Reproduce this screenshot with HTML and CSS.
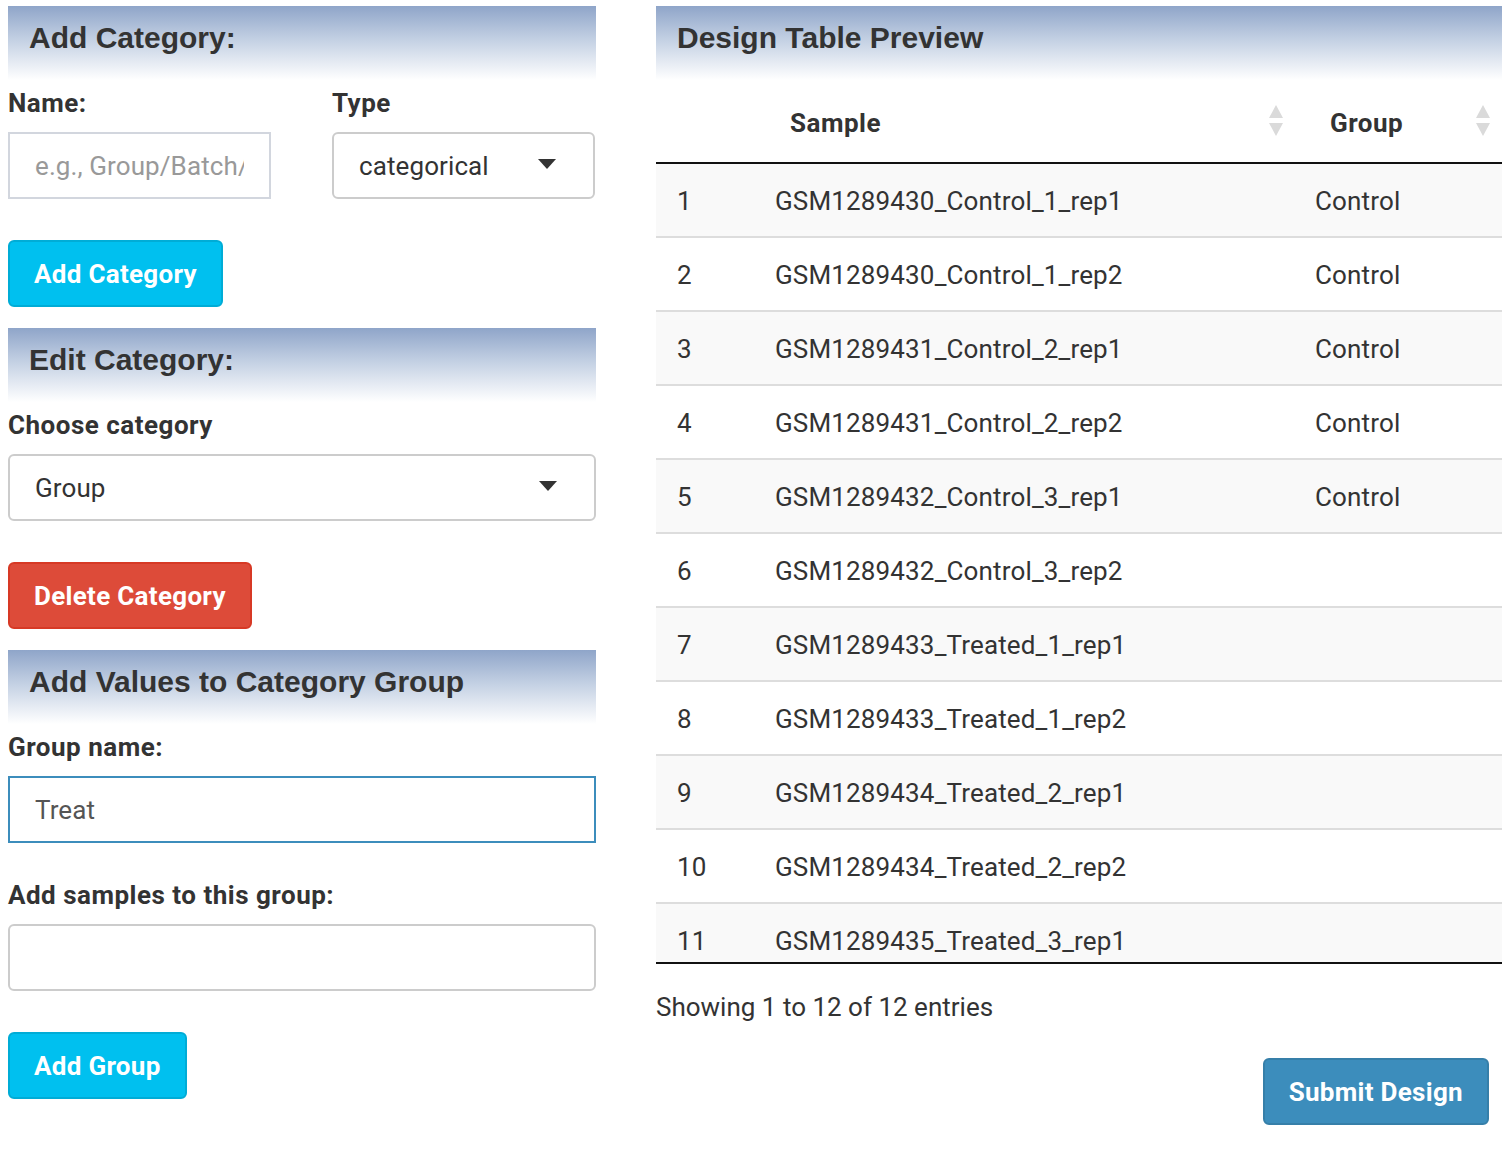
FILE: index.html
```html
<!DOCTYPE html>
<html lang="en">
<head>
<meta charset="utf-8">
<title>Design Table</title>
<link rel="stylesheet" href="styles.css">
</head>
<body>
<div class="page">
  <div class="left">
    <h3 class="box-title">Add Category:</h3>
    <div class="row2">
      <div class="field">
        <label class="lbl">Name:</label>
        <input class="text-input plain" type="text" placeholder="e.g., Group/Batch/Time">
      </div>
      <div class="field">
        <label class="lbl">Type</label>
        <div class="select"><span>categorical</span><span class="caret"></span></div>
      </div>
    </div>
    <button class="btn btn-info">Add Category</button>

    <h3 class="box-title">Edit Category:</h3>
    <label class="lbl">Choose category</label>
    <div class="select"><span>Group</span><span class="caret"></span></div>
    <button class="btn btn-danger">Delete Category</button>

    <h3 class="box-title">Add Values to Category Group</h3>
    <label class="lbl">Group name:</label>
    <input class="text-input focused" type="text" value="Treat">
    <label class="lbl lbl-gap">Add samples to this group:</label>
    <div class="select empty"></div>
    <button class="btn btn-info">Add Group</button>
  </div>

  <div class="right">
    <h3 class="box-title">Design Table Preview</h3>
    <div class="thead">
      <div class="th c-idx"></div>
      <div class="th c-sample">Sample<span class="sort"><svg width="14" height="32" viewBox="0 0 14 32"><path d="M7 0 L14 13 L0 13 Z" fill="#dadada"/><path d="M0 18 L14 18 L7 31 Z" fill="#dadada"/></svg></span></div>
      <div class="th c-group">Group<span class="sort"><svg width="14" height="32" viewBox="0 0 14 32"><path d="M7 0 L14 13 L0 13 Z" fill="#dadada"/><path d="M0 18 L14 18 L7 31 Z" fill="#dadada"/></svg></span></div>
    </div>
    <div class="tbody">
      <div class="tr odd"><div class="td c-idx">1</div><div class="td c-sample">GSM1289430_Control_1_rep1</div><div class="td c-group">Control</div></div>
      <div class="tr"><div class="td c-idx">2</div><div class="td c-sample">GSM1289430_Control_1_rep2</div><div class="td c-group">Control</div></div>
      <div class="tr odd"><div class="td c-idx">3</div><div class="td c-sample">GSM1289431_Control_2_rep1</div><div class="td c-group">Control</div></div>
      <div class="tr"><div class="td c-idx">4</div><div class="td c-sample">GSM1289431_Control_2_rep2</div><div class="td c-group">Control</div></div>
      <div class="tr odd"><div class="td c-idx">5</div><div class="td c-sample">GSM1289432_Control_3_rep1</div><div class="td c-group">Control</div></div>
      <div class="tr"><div class="td c-idx">6</div><div class="td c-sample">GSM1289432_Control_3_rep2</div><div class="td c-group"></div></div>
      <div class="tr odd"><div class="td c-idx">7</div><div class="td c-sample">GSM1289433_Treated_1_rep1</div><div class="td c-group"></div></div>
      <div class="tr"><div class="td c-idx">8</div><div class="td c-sample">GSM1289433_Treated_1_rep2</div><div class="td c-group"></div></div>
      <div class="tr odd"><div class="td c-idx">9</div><div class="td c-sample">GSM1289434_Treated_2_rep1</div><div class="td c-group"></div></div>
      <div class="tr"><div class="td c-idx">10</div><div class="td c-sample">GSM1289434_Treated_2_rep2</div><div class="td c-group"></div></div>
      <div class="tr odd"><div class="td c-idx">11</div><div class="td c-sample">GSM1289435_Treated_3_rep1</div><div class="td c-group"></div></div>
    </div>
    <div class="info">Showing 1 to 12 of 12 entries</div>
    <div class="submit-row"><button class="btn btn-primary">Submit Design</button></div>
  </div>
</div>
</body>
</html>
```

FILE: styles.css
```css
html, body {
  margin: 0;
  padding: 0;
  background: #fff;
}
body {
  font-family: Roboto, "Noto Sans", sans-serif;
  font-size: 26px;
  color: #333;
}
.page {
  display: flex;
  gap: 60px;
  padding: 6px 0 0 8px;
}
.left {
  width: 588px;
  display: flex;
  flex-direction: column;
  align-items: flex-start;
}
.left > * {
  box-sizing: border-box;
}
.right {
  width: 846px;
}
.box-title {
  box-sizing: border-box;
  width: 100%;
  height: 74px;
  margin: 0;
  padding: 15px 0 0 21px;
  font-family: "Liberation Sans", Arial, sans-serif;
  font-weight: 700;
  font-size: 30px;
  line-height: 34px;
  color: #333;
  background: linear-gradient(to bottom, #8fa5c9 0%, #c3d0e3 45%, #ffffff 100%);
}
.lbl {
  display: block;
  font-weight: 700;
  font-size: 26px;
  letter-spacing: 0.5px;
  line-height: 30px;
  margin: 8px 0 14px 0;
  color: #333;
}
.lbl-gap {
  margin-top: 37px;
}
.row2 {
  display: flex;
  gap: 61px;
  width: 100%;
}
.field {
  width: 263px;
}
.text-input {
  box-sizing: border-box;
  display: block;
  width: 100%;
  height: 67px;
  padding: 0 25px;
  font-family: Roboto, "Noto Sans", sans-serif;
  font-size: 26px;
  letter-spacing: 0.1px;
  color: #555;
  border: 2px solid #d2d6de;
  border-radius: 0;
  outline: none;
  background: #fff;
}
.text-input::placeholder {
  color: #999;
}
.text-input.focused {
  border-color: #3c8dbc;
}
.select {
  box-sizing: border-box;
  width: 100%;
  height: 67px;
  display: flex;
  align-items: center;
  justify-content: space-between;
  padding: 0 37px 0 25px;
  border: 2px solid #ccc;
  border-radius: 6px;
  background: #fff;
  color: #333;
  letter-spacing: 0.1px;
}
.caret {
  width: 0;
  height: 0;
  border-left: 9px solid transparent;
  border-right: 9px solid transparent;
  border-top: 10px solid #333;
  margin-top: -4px;
}
.btn {
  box-sizing: border-box;
  height: 67px;
  padding: 0 24px;
  margin: 41px 0 21px 0;
  font-family: Roboto, "Noto Sans", sans-serif;
  font-weight: 700;
  font-size: 26px;
  letter-spacing: 0.3px;
  color: #fff;
  border-radius: 6px;
  border: 2px solid transparent;
  cursor: pointer;
}
.btn-info {
  background: #00c0ef;
  border-color: #00acd6;
}
.btn-danger {
  background: #dd4b39;
  border-color: #d73925;
}
.btn-primary {
  background: #3c8dbc;
  border-color: #367fa9;
}
.thead {
  display: flex;
  height: 82px;
  border-bottom: 2px solid #111;
}
.th {
  box-sizing: border-box;
  display: flex;
  align-items: center;
  justify-content: space-between;
  padding: 4px 12px 0 35px;
  font-weight: 700;
  font-size: 26px;
  letter-spacing: 0.5px;
}
.sort {
  display: flex;
  margin-top: -4px;
}
.c-idx { width: 99px; }
.c-sample { width: 540px; }
.c-group { width: 207px; }
.tbody {
  height: 798px;
  overflow: hidden;
  border-bottom: 2px solid #111;
}
.tr {
  display: flex;
  height: 72px;
  border-top: 2px solid #ddd;
  background: #fff;
}
.tr:first-child {
  border-top: 0;
}
.tr.odd {
  background: #f9f9f9;
}
.td {
  box-sizing: border-box;
  display: flex;
  align-items: center;
  padding: 2px 20px 0 20px;
  font-size: 26px;
  letter-spacing: 0.15px;
}
.td.c-idx {
  padding-left: 21px;
}
.info {
  margin-top: 28px;
  font-size: 26px;
  line-height: 30px;
}
.submit-row {
  display: flex;
  justify-content: flex-end;
  padding-right: 13px;
}
.submit-row .btn {
  margin: 36px 0 0 0;
}
```
